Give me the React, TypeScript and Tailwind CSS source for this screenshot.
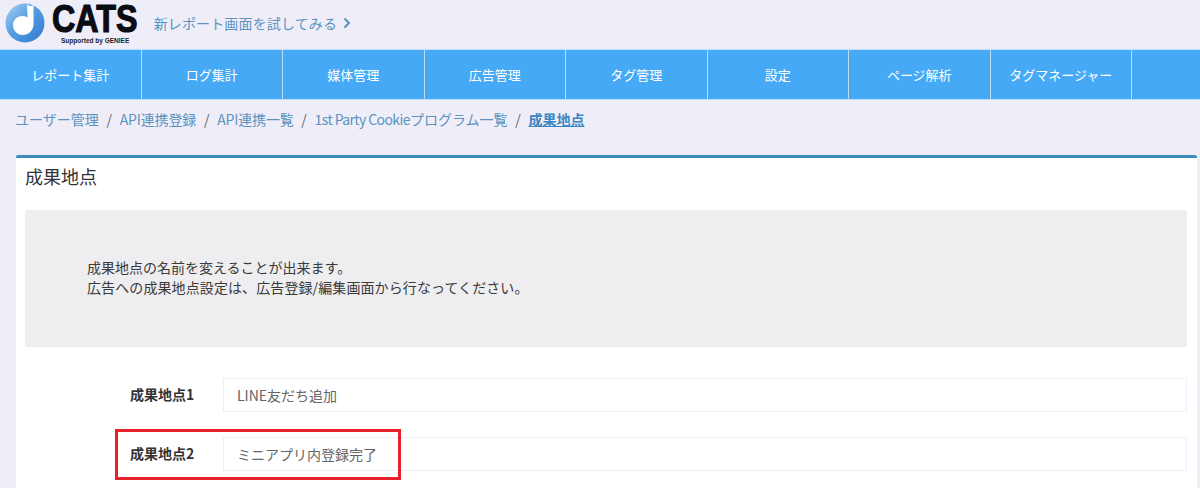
import { ChevronRight } from "lucide-react";

const navItems = ["レポート集計", "ログ集計", "媒体管理", "広告管理", "タグ管理", "設定", "ページ解析", "タグマネージャー"];

function Logo() {
  return (
    <div className="flex shrink-0 items-start">
      <svg width="40" height="40" viewBox="0 0 40 40" className="mt-[3px] ml-[5px] shrink-0">
        <defs>
          <linearGradient id="logoBlue" x1="0" y1="0" x2="1" y2="1">
            <stop offset="0" stopColor="#a9d2f0" />
            <stop offset="0.45" stopColor="#559fe2" />
            <stop offset="1" stopColor="#2f78cc" />
          </linearGradient>
        </defs>
        <circle cx="20" cy="20" r="19.5" fill="url(#logoBlue)" />
        <path d="M22 1 C22.5 3 27.5 4 28.5 1.5 L28.5 21 C28.5 27.5 23.5 32 17.5 32 C12 32 8 27.5 8 22 C8 17 12 13 17.5 13 C19.5 13 21 13.5 22.5 14.5 Z" fill="#ffffff" />
      </svg>
      <div className="ml-[7px] flex flex-col">
        <span className="mt-[-3px] mb-[-4px] origin-left scale-x-[0.85] text-[38px] leading-[44px] font-bold whitespace-nowrap text-[#0b0b14] font-['Liberation_Sans',sans-serif] [-webkit-text-stroke:1.2px_#0b0b14]">
          CATS
        </span>
        <span className="ml-[9px] text-[6.5px] leading-[8px] font-bold whitespace-nowrap text-[#222] font-['Liberation_Sans',sans-serif]">
          Supported by GENIEE
        </span>
      </div>
    </div>
  );
}

function Separator() {
  return <span className="mx-[7.75px] text-[#666]">/</span>;
}

function FieldRow({ label, value }: { label: string; value: string }) {
  return (
    <div className="flex h-[34px] items-center pl-[105px]">
      <label className="mt-[-2px] w-[93px] text-[14px] font-bold text-[#333]">{label}</label>
      <div className="flex h-[34px] flex-1 items-center border border-[#eeeef6] pl-[13px] text-[14px] text-[#666]">
        {value}
      </div>
    </div>
  );
}

export default function App() {
  return (
    <div className="relative flex h-[488px] w-[1200px] flex-col overflow-hidden bg-[#efeef8] font-['Noto_Sans_CJK_JP','Noto_Sans',sans-serif]">
      <header className="flex h-[49px] shrink-0 items-start">
        <Logo />
        <a className="mt-[13px] ml-[1px] flex items-center text-[14px] leading-[20px] tracking-[0.15px] text-[#5b93c0]">
          新レポート画面を試してみる
          <ChevronRight size={16} strokeWidth={3} className="ml-[2px]" />
        </a>
      </header>

      <nav className="flex h-[51px] shrink-0 border-y border-[#b9dff8] bg-[#45a9f5]">
        {navItems.map((item) => (
          <div
            key={item}
            className="flex w-[141.5px] items-center justify-center border-r border-[#b9dff8] text-[13px] text-white"
          >
            {item}
          </div>
        ))}
      </nav>

      <div className="flex h-[39px] shrink-0 items-center pl-[15px] text-[14px] text-[#5b93c0]">
        <span>ユーザー管理</span>
        <Separator />
        <span className="tracking-[-0.15px]">API連携登録</span>
        <Separator />
        <span className="tracking-[-0.15px]">API連携一覧</span>
        <Separator />
        <span>
          <span className="tracking-[-0.6px]">1st Party Cookie</span>プログラム一覧
        </span>
        <Separator />
        <span className="font-bold text-[#3b86c4] underline">成果地点</span>
      </div>

      <main className="mt-[16px] ml-[16px] w-[1181px] flex-1 rounded-t-[2px] border-t-[3px] border-[#3c8dbc] bg-white pr-[10px] pl-[9px]">
        <h2 className="h-[52px] pt-[5px] text-[18px] leading-[27px] text-[#333]">成果地点</h2>

        <div className="flex h-[137px] flex-col justify-center rounded-[3px] bg-[#eeedef] pb-[4px] pl-[62px] text-[14px] leading-[20px] text-[#3a3a3a]">
          <p>成果地点の名前を変えることが出来ます。</p>
          <p className="tracking-[0.1px]">広告への成果地点設定は、広告登録/編集画面から行なってください。</p>
        </div>

        <div className="mt-[31px] flex flex-col gap-[25px]">
          <FieldRow label="成果地点1" value="LINE友だち追加" />
          <FieldRow label="成果地点2" value="ミニアプリ内登録完了" />
        </div>
      </main>

      <div className="absolute top-[429px] left-[115px] h-[51px] w-[286px] border-[3px] border-[#e8202c]" />
    </div>
  );
}
